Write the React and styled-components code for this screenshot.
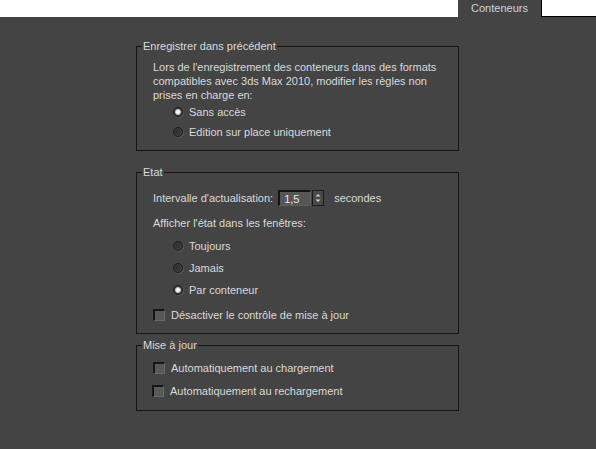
import styled, { createGlobalStyle } from "styled-components";

const Global = createGlobalStyle`
  html, body {
    margin: 0;
    padding: 0;
    background: #444444;
  }
  body {
    font-family: "Liberation Sans", Arial, sans-serif;
    font-size: 11px;
    color: #dadada;
  }
`;

const Page = styled.div`
  width: 596px;
  height: 449px;
  background: #444444;
  overflow: hidden;
`;

const TabStrip = styled.div`
  display: flex;
  height: 17px;
`;

const Blank = styled.div`
  flex: ${({ grow }) => (grow ? 1 : "none")};
  width: ${({ grow }) => (grow ? "auto" : "55px")};
  background: #ffffff;
  box-sizing: border-box;
  border-left: ${({ edged }) => (edged ? "1px solid #000" : "none")};
  border-bottom: ${({ edged }) => (edged ? "1px solid #000" : "none")};
`;

const Tab = styled.div`
  width: 83px;
  display: flex;
  align-items: center;
  justify-content: center;
  background: #444444;
  color: #c9d5e0;
  font-size: 11px;
  padding-bottom: 1px;
`;

const Content = styled.div`
  display: flex;
  flex-direction: column;
  padding: 22px 0 0 136px;
  width: 323px;
`;

const Group = styled.fieldset`
  margin: ${({ gap }) => gap || 0}px 0 0 0;
  padding: 0;
  border: 1px solid #141414;
  min-width: 0;
`;

const Legend = styled.legend`
  margin-left: 5px;
  padding: 0 1px;
  line-height: 14px;
  color: #dadada;
`;

const Body = styled.div`
  display: flex;
  flex-direction: column;
  padding: ${({ top }) => top}px 0 ${({ bottom }) => bottom}px 16px;
`;

const Para = styled.p`
  margin: 0;
  line-height: 14px;
`;

const Row = styled.div`
  display: flex;
  align-items: center;
  height: ${({ h }) => h || 20}px;
  margin-top: ${({ mt }) => mt || 0}px;
  padding-left: ${({ indent }) => indent || 0}px;
  white-space: nowrap;
`;

const Radio = styled.span`
  box-sizing: border-box;
  width: 10px;
  height: 10px;
  border-radius: 50%;
  margin-right: 6px;
  border: 1px solid #1c1c1c;
  box-shadow: 1px 1px 0 #585858;
  background: ${({ checked }) =>
    checked
      ? "radial-gradient(circle at 50% 50%, #f4f4f4 0 1.6px, #b0b0b0 2.6px, #3a3a3a 3.6px)"
      : "radial-gradient(circle at 40% 40%, #333 0 2px, #3d3d3d 4px)"};
`;

const Check = styled.span`
  box-sizing: border-box;
  width: 12px;
  height: 12px;
  margin-right: 6px;
  margin-left: ${({ shift }) => shift || 0}px;
  background: #585858;
  border-top: 2px solid #161616;
  border-left: 2px solid #161616;
  border-right: 1px solid #6a6a6a;
  border-bottom: 1px solid #6a6a6a;
`;

const Spinner = styled.div`
  display: flex;
  align-items: center;
  margin: 0 10px 0 5px;
`;

const Field = styled.div`
  box-sizing: border-box;
  width: 33px;
  height: 16px;
  padding: 0 0 0 4px;
  display: flex;
  align-items: center;
  background: #565656;
  color: #e4e8f0;
  border-top: 2px solid #141414;
  border-left: 2px solid #141414;
  border-right: 1px solid #5f5f5f;
  border-bottom: 1px solid #5f5f5f;
`;

const SpinButton = styled.div`
  box-sizing: border-box;
  width: 12px;
  height: 16px;
  margin-left: 1px;
  border: 1px solid #1a1a1a;
  background: #4a4a4a;
  display: flex;
  align-items: center;
  justify-content: center;
`;

const RadioRow = ({ checked, label, h, mt }) => (
  <Row indent={20} h={h} mt={mt}>
    <Radio checked={checked} />
    {label}
  </Row>
);

const CheckRow = ({ label, h, mt, shift }) => (
  <Row h={h} mt={mt}>
    <Check shift={shift} />
    {label}
  </Row>
);

export default function App() {
  return (
    <Page>
      <Global />
      <TabStrip>
        <Blank grow />
        <Tab>Conteneurs</Tab>
        <Blank edged />
      </TabStrip>
      <Content>
        <Group>
          <Legend>Enregistrer dans précédent</Legend>
          <Body top={7} bottom={8}>
            <Para>
              Lors de l'enregistrement des conteneurs dans des formats
              <br />
              compatibles avec 3ds Max 2010, modifier les règles non
              <br />
              prises en charge en:
            </Para>
            <RadioRow checked label="Sans accès" />
            <RadioRow label="Edition sur place uniquement" />
          </Body>
        </Group>
        <Group gap={14}>
          <Legend>Etat</Legend>
          <Body top={9} bottom={8}>
            <Row>
              Intervalle d'actualisation:
              <Spinner>
                <Field>1,5</Field>
                <SpinButton>
                  <svg width="6" height="10" viewBox="0 0 6 10">
                    <path d="M3 1 L5.5 3.5 L0.5 3.5 Z" fill="#d0d0d0" />
                    <path d="M3 9 L5.5 6.5 L0.5 6.5 Z" fill="#d0d0d0" />
                  </svg>
                </SpinButton>
              </Spinner>
              secondes
            </Row>
            <Row h={14} mt={8}>
              Afficher l'état dans les fenêtres:
            </Row>
            <RadioRow h={22} mt={5} label="Toujours" />
            <RadioRow h={22} label="Jamais" />
            <RadioRow h={22} checked label="Par conteneur" />
            <CheckRow mt={4} label="Désactiver le contrôle de mise à jour" />
          </Body>
        </Group>
        <Group gap={4}>
          <Legend>Mise à jour</Legend>
          <Body top={6} bottom={9}>
            <CheckRow label="Automatiquement au chargement" />
            <CheckRow mt={3} shift={-1} label="Automatiquement au rechargement" />
          </Body>
        </Group>
      </Content>
    </Page>
  );
}
